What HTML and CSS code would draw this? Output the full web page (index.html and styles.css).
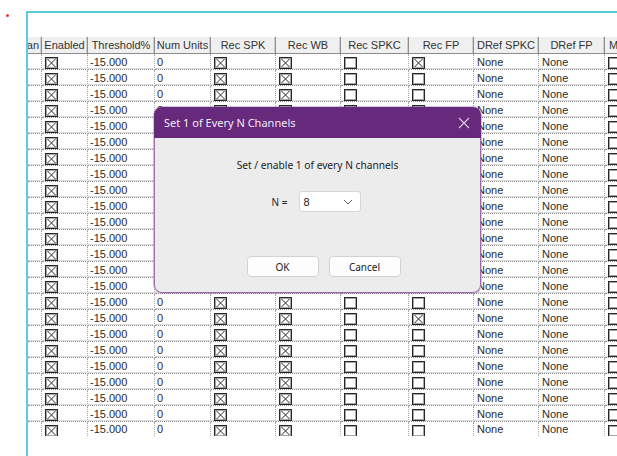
FILE: index.html
```html
<!DOCTYPE html>
<html>
<head>
<meta charset="utf-8">
<link rel="stylesheet" href="styles.css">
</head>
<body>
<div class="marker"></div>
<div class="frame">
  <div class="grid">
    <div class="row head">
      <span class="h h-first">Chan</span><span class="h">Enabled</span><span class="h">Threshold%</span><span class="h">Num Units</span><span class="h">Rec SPK</span><span class="h">Rec WB</span><span class="h">Rec SPKC</span><span class="h">Rec FP</span><span class="h">DRef SPKC</span><span class="h">DRef FP</span><span class="h h-last">Monitor</span>
    </div>
    <div class="row"><span class="c"></span><span class="c b"><i class="cb on"></i></span><span class="c">-15.000</span><span class="c">0</span><span class="c b"><i class="cb on"></i></span><span class="c b"><i class="cb on"></i></span><span class="c b"><i class="cb"></i></span><span class="c b"><i class="cb on"></i></span><span class="c t">None</span><span class="c t">None</span><span class="c b"><i class="cb"></i></span></div>
    <div class="row"><span class="c"></span><span class="c b"><i class="cb on"></i></span><span class="c">-15.000</span><span class="c">0</span><span class="c b"><i class="cb on"></i></span><span class="c b"><i class="cb on"></i></span><span class="c b"><i class="cb"></i></span><span class="c b"><i class="cb"></i></span><span class="c t">None</span><span class="c t">None</span><span class="c b"><i class="cb"></i></span></div>
    <div class="row"><span class="c"></span><span class="c b"><i class="cb on"></i></span><span class="c">-15.000</span><span class="c">0</span><span class="c b"><i class="cb on"></i></span><span class="c b"><i class="cb on"></i></span><span class="c b"><i class="cb"></i></span><span class="c b"><i class="cb"></i></span><span class="c t">None</span><span class="c t">None</span><span class="c b"><i class="cb"></i></span></div>
    <div class="row"><span class="c"></span><span class="c b"><i class="cb on"></i></span><span class="c">-15.000</span><span class="c">0</span><span class="c b"><i class="cb on"></i></span><span class="c b"><i class="cb on"></i></span><span class="c b"><i class="cb"></i></span><span class="c b"><i class="cb"></i></span><span class="c t">None</span><span class="c t">None</span><span class="c b"><i class="cb"></i></span></div>
    <div class="row"><span class="c"></span><span class="c b"><i class="cb on"></i></span><span class="c">-15.000</span><span class="c">0</span><span class="c b"><i class="cb on"></i></span><span class="c b"><i class="cb on"></i></span><span class="c b"><i class="cb"></i></span><span class="c b"><i class="cb"></i></span><span class="c t">None</span><span class="c t">None</span><span class="c b"><i class="cb"></i></span></div>
    <div class="row"><span class="c"></span><span class="c b"><i class="cb on"></i></span><span class="c">-15.000</span><span class="c">0</span><span class="c b"><i class="cb on"></i></span><span class="c b"><i class="cb on"></i></span><span class="c b"><i class="cb"></i></span><span class="c b"><i class="cb"></i></span><span class="c t">None</span><span class="c t">None</span><span class="c b"><i class="cb"></i></span></div>
    <div class="row"><span class="c"></span><span class="c b"><i class="cb on"></i></span><span class="c">-15.000</span><span class="c">0</span><span class="c b"><i class="cb on"></i></span><span class="c b"><i class="cb on"></i></span><span class="c b"><i class="cb"></i></span><span class="c b"><i class="cb"></i></span><span class="c t">None</span><span class="c t">None</span><span class="c b"><i class="cb"></i></span></div>
    <div class="row"><span class="c"></span><span class="c b"><i class="cb on"></i></span><span class="c">-15.000</span><span class="c">0</span><span class="c b"><i class="cb on"></i></span><span class="c b"><i class="cb on"></i></span><span class="c b"><i class="cb"></i></span><span class="c b"><i class="cb"></i></span><span class="c t">None</span><span class="c t">None</span><span class="c b"><i class="cb"></i></span></div>
    <div class="row"><span class="c"></span><span class="c b"><i class="cb on"></i></span><span class="c">-15.000</span><span class="c">0</span><span class="c b"><i class="cb on"></i></span><span class="c b"><i class="cb on"></i></span><span class="c b"><i class="cb"></i></span><span class="c b"><i class="cb"></i></span><span class="c t">None</span><span class="c t">None</span><span class="c b"><i class="cb"></i></span></div>
    <div class="row"><span class="c"></span><span class="c b"><i class="cb on"></i></span><span class="c">-15.000</span><span class="c">0</span><span class="c b"><i class="cb on"></i></span><span class="c b"><i class="cb on"></i></span><span class="c b"><i class="cb"></i></span><span class="c b"><i class="cb"></i></span><span class="c t">None</span><span class="c t">None</span><span class="c b"><i class="cb"></i></span></div>
    <div class="row"><span class="c"></span><span class="c b"><i class="cb on"></i></span><span class="c">-15.000</span><span class="c">0</span><span class="c b"><i class="cb on"></i></span><span class="c b"><i class="cb on"></i></span><span class="c b"><i class="cb"></i></span><span class="c b"><i class="cb"></i></span><span class="c t">None</span><span class="c t">None</span><span class="c b"><i class="cb"></i></span></div>
    <div class="row"><span class="c"></span><span class="c b"><i class="cb on"></i></span><span class="c">-15.000</span><span class="c">0</span><span class="c b"><i class="cb on"></i></span><span class="c b"><i class="cb on"></i></span><span class="c b"><i class="cb"></i></span><span class="c b"><i class="cb"></i></span><span class="c t">None</span><span class="c t">None</span><span class="c b"><i class="cb"></i></span></div>
    <div class="row"><span class="c"></span><span class="c b"><i class="cb on"></i></span><span class="c">-15.000</span><span class="c">0</span><span class="c b"><i class="cb on"></i></span><span class="c b"><i class="cb on"></i></span><span class="c b"><i class="cb"></i></span><span class="c b"><i class="cb"></i></span><span class="c t">None</span><span class="c t">None</span><span class="c b"><i class="cb"></i></span></div>
    <div class="row"><span class="c"></span><span class="c b"><i class="cb on"></i></span><span class="c">-15.000</span><span class="c">0</span><span class="c b"><i class="cb on"></i></span><span class="c b"><i class="cb on"></i></span><span class="c b"><i class="cb"></i></span><span class="c b"><i class="cb"></i></span><span class="c t">None</span><span class="c t">None</span><span class="c b"><i class="cb"></i></span></div>
    <div class="row"><span class="c"></span><span class="c b"><i class="cb on"></i></span><span class="c">-15.000</span><span class="c">0</span><span class="c b"><i class="cb on"></i></span><span class="c b"><i class="cb on"></i></span><span class="c b"><i class="cb"></i></span><span class="c b"><i class="cb"></i></span><span class="c t">None</span><span class="c t">None</span><span class="c b"><i class="cb"></i></span></div>
    <div class="row"><span class="c"></span><span class="c b"><i class="cb on"></i></span><span class="c">-15.000</span><span class="c">0</span><span class="c b"><i class="cb on"></i></span><span class="c b"><i class="cb on"></i></span><span class="c b"><i class="cb"></i></span><span class="c b"><i class="cb"></i></span><span class="c t">None</span><span class="c t">None</span><span class="c b"><i class="cb"></i></span></div>
    <div class="row"><span class="c"></span><span class="c b"><i class="cb on"></i></span><span class="c">-15.000</span><span class="c">0</span><span class="c b"><i class="cb on"></i></span><span class="c b"><i class="cb on"></i></span><span class="c b"><i class="cb"></i></span><span class="c b"><i class="cb on"></i></span><span class="c t">None</span><span class="c t">None</span><span class="c b"><i class="cb"></i></span></div>
    <div class="row"><span class="c"></span><span class="c b"><i class="cb on"></i></span><span class="c">-15.000</span><span class="c">0</span><span class="c b"><i class="cb on"></i></span><span class="c b"><i class="cb on"></i></span><span class="c b"><i class="cb"></i></span><span class="c b"><i class="cb"></i></span><span class="c t">None</span><span class="c t">None</span><span class="c b"><i class="cb"></i></span></div>
    <div class="row"><span class="c"></span><span class="c b"><i class="cb on"></i></span><span class="c">-15.000</span><span class="c">0</span><span class="c b"><i class="cb on"></i></span><span class="c b"><i class="cb on"></i></span><span class="c b"><i class="cb"></i></span><span class="c b"><i class="cb"></i></span><span class="c t">None</span><span class="c t">None</span><span class="c b"><i class="cb"></i></span></div>
    <div class="row"><span class="c"></span><span class="c b"><i class="cb on"></i></span><span class="c">-15.000</span><span class="c">0</span><span class="c b"><i class="cb on"></i></span><span class="c b"><i class="cb on"></i></span><span class="c b"><i class="cb"></i></span><span class="c b"><i class="cb"></i></span><span class="c t">None</span><span class="c t">None</span><span class="c b"><i class="cb"></i></span></div>
    <div class="row"><span class="c"></span><span class="c b"><i class="cb on"></i></span><span class="c">-15.000</span><span class="c">0</span><span class="c b"><i class="cb on"></i></span><span class="c b"><i class="cb on"></i></span><span class="c b"><i class="cb"></i></span><span class="c b"><i class="cb"></i></span><span class="c t">None</span><span class="c t">None</span><span class="c b"><i class="cb"></i></span></div>
    <div class="row"><span class="c"></span><span class="c b"><i class="cb on"></i></span><span class="c">-15.000</span><span class="c">0</span><span class="c b"><i class="cb on"></i></span><span class="c b"><i class="cb on"></i></span><span class="c b"><i class="cb"></i></span><span class="c b"><i class="cb"></i></span><span class="c t">None</span><span class="c t">None</span><span class="c b"><i class="cb"></i></span></div>
    <div class="row"><span class="c"></span><span class="c b"><i class="cb on"></i></span><span class="c">-15.000</span><span class="c">0</span><span class="c b"><i class="cb on"></i></span><span class="c b"><i class="cb on"></i></span><span class="c b"><i class="cb"></i></span><span class="c b"><i class="cb"></i></span><span class="c t">None</span><span class="c t">None</span><span class="c b"><i class="cb"></i></span></div>
    <div class="row last"><span class="c"></span><span class="c b"><i class="cb on"></i></span><span class="c">-15.000</span><span class="c">0</span><span class="c b"><i class="cb on"></i></span><span class="c b"><i class="cb on"></i></span><span class="c b"><i class="cb"></i></span><span class="c b"><i class="cb"></i></span><span class="c t">None</span><span class="c t">None</span><span class="c b"><i class="cb"></i></span></div>
  </div>
</div>

<div class="dialog">
  <div class="dlg-title">
    <span class="dlg-caption">Set 1 of Every N Channels</span>
    <svg class="dlg-close" width="12" height="12" viewBox="0 0 12 12"><path d="M1 1 L11 11 M11 1 L1 11" stroke="#d9cde0" stroke-width="1.1" fill="none"/></svg>
  </div>
  <div class="dlg-body">
    <div class="dlg-text">Set / enable 1 of every N channels</div>
    <div class="dlg-field">
      <span class="dlg-label">N =</span>
      <div class="combo">
        <span class="combo-value">8</span>
        <svg class="combo-arrow" width="10" height="6" viewBox="0 0 10 6"><path d="M1 1 L5 5 L9 1" stroke="#606060" stroke-width="1" fill="none"/></svg>
      </div>
    </div>
    <div class="dlg-buttons">
      <button class="btn">OK</button>
      <button class="btn">Cancel</button>
    </div>
  </div>
</div>
</body>
</html>
```

FILE: styles.css
```css
html, body {
  margin: 0;
  padding: 0;
  background: #ffffff;
  height: 100%;
  overflow: hidden;
}

body {
  display: flex;
  align-items: flex-start;
  font-family: "Liberation Sans", Arial, sans-serif;
  font-size: 11px;
  color: #2b2b2b;
}

.marker {
  flex: none;
  width: 3px;
  height: 3px;
  margin: 14px 0 0 6px;
  border-radius: 50%;
  background: #e23a3a;
}

.frame {
  flex: 1;
  margin: 11px 0 0 17px;
  height: calc(100vh - 11px);
  border-top: 2px solid #5ccbe0;
  border-left: 2px solid #5ccbe0;
  padding-top: 24px;
  box-sizing: border-box;
  overflow: hidden;
}

.grid {
  width: 700px;
}

.row {
  display: grid;
  grid-template-columns: 14px 46px 67px 56px 65px 65px 68px 65px 65px 66px 90px;
  height: 16px;
}

/* the list is cut by the bottom of the panel */
.row.last {
  height: 14px;
  overflow: hidden;
}

.row.last .c {
  border-bottom: none;
  box-shadow: none;
}

/* header */
.head {
  background: #f0f0f0;
  height: 17px;
  border-bottom: 1px solid #8c8c8c;
  box-sizing: border-box;
}

.h {
  display: flex;
  align-items: center;
  justify-content: center;
  white-space: nowrap;
  overflow: hidden;
  color: #333;
  border-right: 1px solid #8e8e8e;
  box-shadow: inset -1px 0 0 #cfcfcf;
}

.h-first {
  justify-content: flex-end;
  padding-right: 2px;
}

.h-last {
  justify-content: flex-start;
  padding-left: 4px;
  border-right: none;
  box-shadow: none;
}

/* data cells */
.c {
  display: flex;
  align-items: center;
  padding-left: 2px;
  white-space: nowrap;
  overflow: hidden;
  border-right: 1px dotted #a8a8a8;
  border-bottom: 1px dotted #8f8f8f;
  box-shadow: inset 0 -1px 0 #dadada;
}

.c.b {
  padding-left: 3px;
  align-items: flex-start;
  padding-top: 3px;
}

.c.t {
  padding-left: 3px;
}

/* checkboxes */
.cb {
  display: block;
  flex: none;
  width: 13px;
  height: 12px;
  box-sizing: border-box;
  border: 1px solid #262626;
  box-shadow: inset 0 0 0 1px #a6a6a6;
  background: #fff;
}

.cb.on {
  background:
    linear-gradient(45deg, transparent calc(50% - 0.8px), #3c3c3c 50%, transparent calc(50% + 0.8px)),
    linear-gradient(-45deg, transparent calc(50% - 0.8px), #3c3c3c 50%, transparent calc(50% + 0.8px)),
    #fff;
}

/* modal dialog */
.dialog {
  position: absolute;
  left: 154px;
  top: 107px;
  width: 327px;
  height: 186px;
  display: flex;
  flex-direction: column;
  border-radius: 8px;
  overflow: hidden;
  box-shadow: 0 0 0 1px rgba(120, 80, 140, 0.35);
  font-family: "Noto Sans", "Open Sans", sans-serif;
}

.dlg-title {
  flex: none;
  height: 31px;
  background: #67297b;
  display: flex;
  align-items: center;
  justify-content: space-between;
  padding: 0 11px 0 10px;
}

.dlg-caption {
  color: #f2ecf5;
  font-size: 11px;
}

.dlg-close {
  display: block;
}

.dlg-body {
  flex: 1;
  background: #ececec;
  border: 1px solid #9a6aaa;
  border-top: none;
  border-radius: 0 0 8px 8px;
  display: flex;
  flex-direction: column;
  align-items: center;
}

.dlg-text {
  margin-top: 20px;
  font-size: 10.2px;
  line-height: 14px;
  color: #222;
}

.dlg-field {
  margin-top: 19px;
  display: flex;
  align-items: center;
  gap: 12px;
  margin-left: -2px;
}

.dlg-label {
  font-size: 10px;
  color: #222;
}

.combo {
  width: 62px;
  height: 21px;
  box-sizing: border-box;
  background: #fff;
  border: 1px solid #d6d6d6;
  border-radius: 3px;
  display: flex;
  align-items: center;
  justify-content: space-between;
  padding: 0 7px 0 3px;
  font-family: "Liberation Sans", Arial, sans-serif;
  font-size: 11px;
  color: #222;
}

.combo-arrow {
  display: block;
}

.dlg-buttons {
  margin-top: 44px;
  margin-left: 12px;
  display: flex;
  gap: 10px;
}

.btn {
  width: 72px;
  height: 21px;
  box-sizing: border-box;
  background: #fdfdfd;
  border: 1px solid #d2d2d2;
  border-radius: 4px;
  font-family: "Noto Sans", "Open Sans", sans-serif;
  font-size: 10px;
  color: #222;
  padding: 0;
}
```
